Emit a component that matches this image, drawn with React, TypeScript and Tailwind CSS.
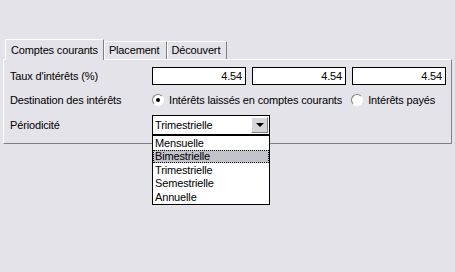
import { useState } from 'react';

const rates = ['4.54', '4.54', '4.54'];
const periods = ['Mensuelle', 'Bimestrielle', 'Trimestrielle', 'Semestrielle', 'Annuelle'];

function Radio({ checked, label }: { checked?: boolean; label: string }) {
  return (
    <label className="flex items-center gap-[5px]">
      <span className="relative flex h-[12px] w-[12px] items-center justify-center rounded-full border border-t-[#808080] border-l-[#808080] border-r-white border-b-white bg-white">
        {checked && <span className="h-[4px] w-[4px] rounded-full bg-black" />}
      </span>
      <span>{label}</span>
    </label>
  );
}

export default function App() {
  const [tab] = useState(0);
  const tabs = ['Comptes courants', 'Placement', 'Découvert'];

  return (
    <div
      className="h-[272px] w-[455px] bg-[#e4e3e9] pt-[39px] text-[11px] tracking-[-0.15px] text-black"
      style={{ fontFamily: '"Liberation Sans", Arial, sans-serif' }}
    >
      <div className="relative z-10 flex items-end pl-[5px]">
        {tabs.map((t, i) =>
          i === tab ? (
            <div
              key={t}
              className="-mb-px flex h-[21px] items-center border-l border-t border-r border-l-white border-t-white border-r-[#808080] bg-[#e4e3e9] pl-[5px] pr-[5px]"
            >
              {t}
            </div>
          ) : (
            <div
              key={t}
              className="flex h-[18px] items-center border-l border-t border-r border-l-white border-t-white border-r-[#808080] bg-[#e4e3e9] pl-[4px] pr-[6px]"
            >
              {t}
            </div>
          ),
        )}
      </div>
      <div className="mx-[3px] flex h-[85px] flex-col gap-[6px] border border-l-white border-t-white border-r-[#808080] border-b-[#808080] pl-[6px] pr-[5px] pt-[7px]">
        <div className="flex h-[18px] items-center">
          <span className="w-[142px]">Taux d'intérêts (%)</span>
          <div className="flex gap-[6px]">
            {rates.map((r, i) => (
              <div
                key={i}
                className="flex h-[18px] w-[94px] items-center justify-end border border-black bg-white pr-[3px]"
              >
                {r}
              </div>
            ))}
          </div>
        </div>
        <div className="flex h-[18px] items-center">
          <span className="w-[142px]">Destination des intérêts</span>
          <div className="flex gap-[9px]">
            <Radio checked label="Intérêts laissés en comptes courants" />
            <Radio label="Intérêts payés" />
          </div>
        </div>
        <div className="flex h-[20px] items-center">
          <span className="w-[142px]">Périodicité</span>
          <div className="relative">
            <div className="flex h-[20px] w-[118px] items-center border border-black bg-white pl-[2px]">
              <span className="flex-1">Trimestrielle</span>
              <span className="mr-px flex h-[16px] w-[17px] items-center justify-center border border-l-white border-t-white border-r-[#808080] border-b-[#808080] bg-[#d6d5db]">
                <span className="h-0 w-0 border-l-[4px] border-r-[4px] border-t-[4px] border-l-transparent border-r-transparent border-t-black" />
              </span>
            </div>
            <ul className="absolute left-0 top-full z-20 w-[118px] border border-black bg-white">
              {periods.map((p) => (
                <li
                  key={p}
                  className={
                    p === 'Bimestrielle'
                      ? 'flex h-[13.6px] items-center border border-dotted border-black bg-[#c3c3cb] pl-[1px]'
                      : 'flex h-[13.6px] items-center pl-[2px]'
                  }
                >
                  {p}
                </li>
              ))}
            </ul>
          </div>
        </div>
      </div>
    </div>
  );
}
